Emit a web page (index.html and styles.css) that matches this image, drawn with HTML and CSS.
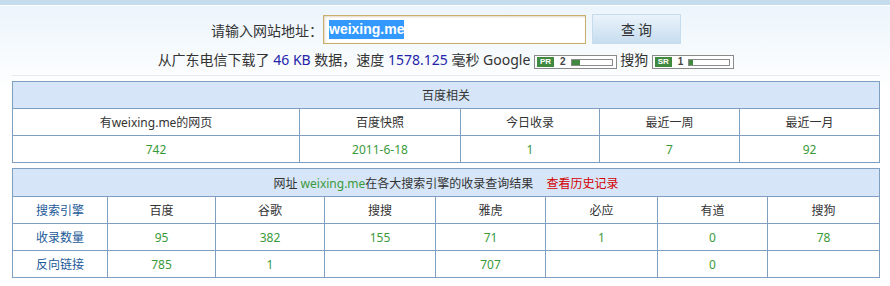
FILE: index.html
```html
<!DOCTYPE html>
<html lang="zh-CN">
<head>
  <meta charset="UTF-8">
  <title>收录查询</title>
  <link rel="stylesheet" href="styles.css">
</head>
<body>

  <div class="topbar"></div>

  <div class="page">
    <div class="search">
      <form class="search-form">
        <label class="search-label">请输入网站地址：</label>
        <div class="search-input"><span class="selected">weixing.me</span></div>
        <button type="button" class="search-btn">查 询</button>
      </form>
      <p class="speed">
        从广东电信下载了 <span class="num">46 KB</span> 数据，速度 <span class="num">1578.125</span> 毫秒 Google
        <span class="rank"><span class="rank-tag">PR</span><b>2</b><span class="rank-bar"><i style="width: 20%"></i></span></span>
        搜狗
        <span class="rank"><span class="rank-tag">SR</span><b>1</b><span class="rank-bar"><i style="width: 10%"></i></span></span>
      </p>
    </div>

    <table class="result baidu">
      <colgroup>
        <col style="width: 287px"><col style="width: 161px"><col style="width: 139px"><col style="width: 140px"><col>
      </colgroup>
      <thead>
        <tr><th colspan="5">百度相关</th></tr>
      </thead>
      <tbody>
        <tr>
          <td>有weixing.me的网页</td>
          <td>百度快照</td>
          <td>今日收录</td>
          <td>最近一周</td>
          <td>最近一月</td>
        </tr>
        <tr class="val">
          <td>742</td>
          <td>2011-6-18</td>
          <td>1</td>
          <td>7</td>
          <td>92</td>
        </tr>
      </tbody>
    </table>

    <table class="result engines">
      <colgroup>
        <col style="width: 95px"><col style="width: 108px"><col style="width: 109px"><col style="width: 111px">
        <col style="width: 110px"><col style="width: 112px"><col style="width: 110px"><col>
      </colgroup>
      <thead>
        <tr><th colspan="8">网址 <span class="site">weixing.me</span>在各大搜索引擎的收录查询结果 <a class="history" href="#">查看历史记录</a></th></tr>
      </thead>
      <tbody>
        <tr>
          <td class="name">搜索引擎</td>
          <td>百度</td><td>谷歌</td><td>搜搜</td><td>雅虎</td><td>必应</td><td>有道</td><td>搜狗</td>
        </tr>
        <tr class="val">
          <td class="name">收录数量</td>
          <td>95</td><td>382</td><td>155</td><td>71</td><td>1</td><td>0</td><td>78</td>
        </tr>
        <tr class="val">
          <td class="name">反向链接</td>
          <td>785</td><td>1</td><td></td><td>707</td><td></td><td>0</td><td></td>
        </tr>
      </tbody>
    </table>
  </div>

</body>
</html>
```

FILE: styles.css
```css
body {
  margin: 0;
  font-family: "Noto Sans", "Noto Sans CJK SC", sans-serif;
  font-size: 12px;
  color: #333;
  background: #fff linear-gradient(#eaf4fb, #fff 90px) no-repeat;
}
.topbar {
  height: 5px;
  background-color: #c4dcec;
  border-bottom: 1px solid #fff;
}
.page {
  width: 868px;
  margin-left: 12px;
}
.search {
  padding-top: 8px;
  padding-bottom: 5px;
  border-bottom: 1px solid #e4e9ee;
}
.search-form {
  display: flex;
  justify-content: center;
  align-items: center;
  margin: 0;
}
.search-label {
  font-size: 14px;
  margin-top: 1px;
}
.search-input {
  box-sizing: border-box;
  width: 263px;
  height: 29px;
  margin-top: 1px;
  padding: 4px 5px;
  background: #fff;
  border: 1px solid #c9ae6c;
  box-shadow: inset 1px 1px 2px rgba(150, 120, 60, 0.3);
}
.selected {
  display: inline-block;
  font-family: "Liberation Sans", sans-serif;
  font-weight: bold;
  font-size: 14px;
  line-height: 19px;
  color: #fff;
  background-color: #3399ff;
}
.search-btn {
  box-sizing: border-box;
  width: 89px;
  height: 30px;
  margin-left: 6px;
  border: 1px solid #c6dbec;
  background: linear-gradient(#eaf3fa, #c7ddef);
  font-family: "Noto Sans CJK SC", sans-serif;
  font-size: 14px;
  color: #333;
}
.speed {
  height: 20px;
  margin: 6px 0 0;
  text-align: center;
  font-size: 14px;
  line-height: 20px;
}
.num {
  color: #2424a8;
}
.rank {
  display: inline-flex;
  align-items: center;
  box-sizing: border-box;
  height: 14px;
  padding: 0 2px;
  vertical-align: 1px;
  border: 1px solid #8a8a8a;
  background: #fff;
  font-family: "Liberation Sans", sans-serif;
  line-height: 10px;
}
.rank-tag {
  display: inline-block;
  width: 17px;
  height: 10px;
  line-height: 10px;
  text-align: center;
  font-size: 8px;
  font-weight: bold;
  color: #fff;
  background-color: #3f8a3f;
}
.rank b {
  font-size: 10px;
  margin: 0 5px 0 6px;
  color: #444;
}
.rank-bar {
  display: inline-block;
  width: 40px;
  height: 5px;
  border: 1px solid #8a8a8a;
  margin-right: 1px;
}
.rank-bar i {
  display: block;
  height: 100%;
  background-color: #3f8a3f;
}

.result {
  width: 868px;
  table-layout: fixed;
  border-collapse: collapse;
  background: #fff;
  margin-top: 5px;
}
.result th,
.result td {
  height: 26px;
  padding: 0;
  border: 1px solid #7f9fc1;
  text-align: center;
  font-weight: normal;
}
.result th {
  background-color: #d6e6f8;
}
.result .val td {
  color: #3a9a3a;
}
.result td.name {
  color: #1d5a98;
}
.engines th {
  height: 27px;
}
.site {
  color: #3a9a3a;
}
.history {
  color: #d40000;
  text-decoration: none;
  margin-left: 10px;
}
```
